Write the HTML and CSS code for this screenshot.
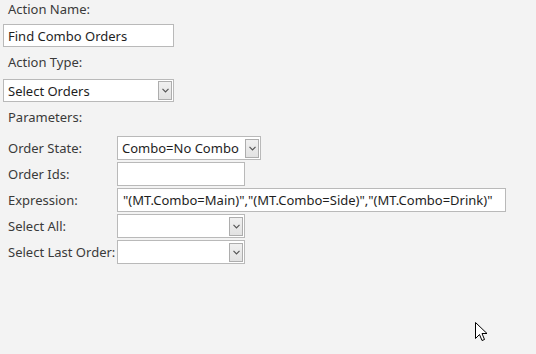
FILE: index.html
```html
<!DOCTYPE html>
<html>
<head>
<meta charset="utf-8">
<link rel="stylesheet" href="styles.css">
</head>
<body>
<div class="form">
  <div class="label top">Action Name:</div>
  <div class="box wide"><span class="val">Find Combo Orders</span></div>
  <div class="label second">Action Type:</div>
  <div class="box wide select"><span class="val">Select Orders</span><span class="drop"><svg width="7" height="5" viewBox="0 0 7 5"><path d="M0.5 0.8 L3.5 3.8 L6.5 0.8" fill="none" stroke="#555" stroke-width="1.2"/></svg></span></div>
  <div class="label params">Parameters:</div>
  <div class="grid">
    <div class="plabel">Order State:</div>
    <div class="box state select"><span class="val">Combo=No Combo</span><span class="drop"><svg width="7" height="5" viewBox="0 0 7 5"><path d="M0.5 0.8 L3.5 3.8 L6.5 0.8" fill="none" stroke="#555" stroke-width="1.2"/></svg></span></div>
    <div class="plabel">Order Ids:</div>
    <div class="box mid"></div>
    <div class="plabel">Expression:</div>
    <div class="box expr"><span class="val">"(MT.Combo=Main)","(MT.Combo=Side)","(MT.Combo=Drink)"</span></div>
    <div class="plabel">Select All:</div>
    <div class="box mid select"><span class="val"></span><span class="drop"><svg width="7" height="5" viewBox="0 0 7 5"><path d="M0.5 0.8 L3.5 3.8 L6.5 0.8" fill="none" stroke="#555" stroke-width="1.2"/></svg></span></div>
    <div class="plabel">Select Last Order:</div>
    <div class="box mid select"><span class="val"></span><span class="drop"><svg width="7" height="5" viewBox="0 0 7 5"><path d="M0.5 0.8 L3.5 3.8 L6.5 0.8" fill="none" stroke="#555" stroke-width="1.2"/></svg></span></div>
  </div>
</div>
<svg class="cursor" width="13" height="21" viewBox="0 0 13 21"><path d="M0.5 0.5 L0.5 16.5 L4.5 12.5 L7 18.5 L9.5 17.5 L7 11.5 L12 11.5 Z" fill="#fff" stroke="#000" stroke-width="1"/></svg>
</body>
</html>
```
FILE: styles.css
```css
html, body {
  margin: 0;
  padding: 0;
  background: #f3f3f3;
  width: 536px;
  height: 354px;
  overflow: hidden;
}
body {
  font-family: "Noto Sans", "Open Sans", sans-serif;
  font-size: 13px;
  color: #3a3a3a;
  position: relative;
}
.form {
  display: flex;
  flex-direction: column;
  align-items: flex-start;
  padding: 0 0 0 3px;
}
.label {
  padding-left: 5px;
  height: 18px;
  line-height: 18px;
}
.label.top { margin-top: 0; padding-bottom: 6px; }
.label.second { margin-top: 6px; padding-bottom: 8px; }
.label.params { margin-top: 6px; }
.box {
  box-sizing: border-box;
  height: 23px;
  border: 1px solid #b9b9b9;
  background: #fff;
  display: flex;
  align-items: center;
  padding-left: 4px;
  color: #1e1e1e;
  white-space: nowrap;
}
.box.wide { width: 171px; }
.select { justify-content: space-between; padding-right: 1px; }
.drop {
  box-sizing: border-box;
  width: 14px;
  height: 19px;
  border: 1px solid #adadad;
  background: linear-gradient(#f0f0f0, #e2e2e2);
  display: flex;
  align-items: center;
  justify-content: center;
}
.grid {
  display: grid;
  grid-template-columns: 114px auto;
  row-gap: 2px;
  margin-top: 10px;
  justify-items: start;
  align-items: center;
}
.plabel { padding-left: 5px; }
.box.state { width: 144px; height: 24px; }
.box.mid { width: 128px; height: 24px; }
.box.expr { width: 389px; height: 24px; padding-left: 5px; }
.cursor {
  position: absolute;
  left: 475px;
  top: 322px;
}
```
